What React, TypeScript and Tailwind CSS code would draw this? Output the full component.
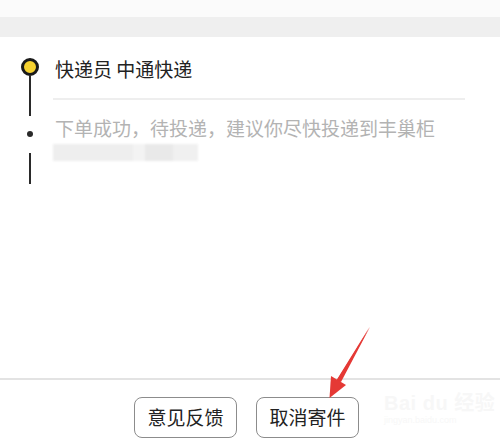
import React from "react";

const font = { fontFamily: '"Noto Sans CJK SC", "Noto Sans", sans-serif' };

export default function App() {
  return (
    <div
      className="relative w-[500px] h-[445px] bg-white flex flex-col overflow-hidden"
      style={font}
    >
      <div className="h-[17px] bg-[#fbfbfb]" />
      <div className="h-[20px] bg-[#efefef]" />

      <div className="flex flex-row">
        {/* timeline */}
        <div className="w-[53px] shrink-0">
          <div className="ml-[21px] w-[18px] flex flex-col items-center">
            <div className="mt-[21px] w-[18px] h-[18px] rounded-full border-[3px] border-[#1a1a1a] bg-[#f6d230]" />
            <div className="w-[2px] h-[40px] bg-[#2a2a2a]" />
            <div className="mt-[15px] w-[6px] h-[6px] rounded-full bg-[#2a2a2a]" />
            <div className="mt-[16px] w-[2px] h-[31px] bg-[#2a2a2a]" />
          </div>
        </div>

        {/* content */}
        <div className="flex-1 flex flex-col pr-[35px]">
          <div className="mt-[19px] ml-[2px] text-[19px] leading-[26px] text-[#222222]">
            快递员 中通快递
          </div>
          <div className="mt-[16px] h-[2px] bg-[#eeeeee]" />
          <div className="mt-[15px] ml-[2px] text-[19px] leading-[26px] text-[#b3b3b3] whitespace-nowrap">
            下单成功，待投递，建议你尽快投递到丰巢柜
          </div>
          <div className="mt-[3px] flex flex-row h-[17px] w-[145px] blur-[1px]">
            <div className="w-[80px] bg-[#eeeeee]" />
            <div className="w-[12px] bg-[#f3f3f3]" />
            <div className="w-[28px] bg-[#e9e9e9]" />
            <div className="w-[25px] bg-[#f0f0f0]" />
          </div>
        </div>
      </div>

      <div className="flex-1" />
      <div className="h-[2px] bg-[#e3e3e3]" />

      <div className="h-[65px] flex flex-row justify-center items-start pt-[17px] pr-[7px] gap-[19px]">
        <button className="w-[103px] h-[41px] rounded-[8px] border-[1.5px] border-[#8c8c8c] bg-white text-[19px] text-[#222222] flex items-center justify-center" style={font}>
          意见反馈
        </button>
        <button className="w-[103px] h-[41px] rounded-[8px] border-[1.5px] border-[#8c8c8c] bg-white text-[19px] text-[#222222] flex items-center justify-center" style={font}>
          取消寄件
        </button>
      </div>

      {/* red annotation arrow */}
      <svg
        className="absolute left-0 top-0 pointer-events-none"
        width="500"
        height="445"
        viewBox="0 0 500 445"
      >
        <path d="M370 327 L337 380 L341 382 Z" fill="#e53935" />
        <path d="M369.5 327 L336 381 L339.5 383 Z" fill="#e53935" />
        <path d="M329.5 398 L331 376 L346 385 Z" fill="#e53935" />
      </svg>

      {/* faint watermark */}
      <div className="absolute left-[384px] top-[392px] flex flex-col items-start pointer-events-none">
        <div className="text-[20px] leading-[22px] font-bold text-[#f7f7f7] tracking-wide" style={{ fontFamily: '"Liberation Sans", "Noto Sans CJK SC", sans-serif' }}>
          Bai du 经验
        </div>
        <div className="text-[9px] leading-[12px] text-[#f7f7f7]" style={{ fontFamily: '"Liberation Sans", sans-serif' }}>
          jingyan.baidu.com
        </div>
      </div>
    </div>
  );
}
